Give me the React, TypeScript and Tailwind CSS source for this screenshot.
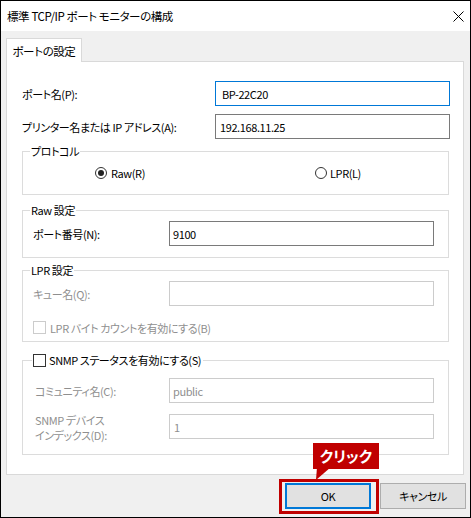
import React from "react";

const inputBase = "flex h-[25px] items-center bg-white";

function Radio({ checked }: { checked?: boolean }) {
  return (
    <span className="flex h-[12px] w-[12px] items-center justify-center rounded-full border border-[#333333] bg-white">
      {checked && <span className="h-[6px] w-[6px] rounded-full bg-[#222222]" />}
    </span>
  );
}

function Check({ disabled }: { disabled?: boolean }) {
  return (
    <span
      className={
        "block h-[13px] w-[13px] shrink-0 border bg-white " +
        (disabled ? "border-[#cccccc]" : "border-[#333333]")
      }
    />
  );
}

export default function App() {
  return (
    <div className="relative h-[518px] w-[471px] bg-white font-['Noto_Sans_CJK_JP',sans-serif] text-[11px] leading-[16px] tracking-[-0.4px] text-black [font-feature-settings:'palt']">
      <div className="flex h-[518px] w-[471px] flex-col border border-black bg-[#f0f0f0]">
        {/* title bar */}
        <div className="flex h-[30px] shrink-0 items-center justify-between bg-white pl-[6px] pr-[6px]">
          <span className="text-[11.5px]">標準 TCP/IP ポート モニターの構成</span>
          <svg width="11" height="11" viewBox="0 0 11 11">
            <path d="M0.5 0.5 L10.5 10.5 M10.5 0.5 L0.5 10.5" stroke="#000" strokeWidth="1" />
          </svg>
        </div>

        {/* tab + page */}
        <div className="pl-[5px] pt-[7px]">
          <div className="relative z-10 -mb-px flex h-[24px] w-[76px] items-center justify-center border border-b-0 border-[#d9d9d9] bg-white text-[11.5px]">
            ポートの設定
          </div>
          <div className="h-[414px] w-[458px] border border-[#d9d9d9] bg-white pl-[15px] pr-[13px] pt-[19px]">
            <div className="flex h-[25px] items-center justify-between">
              <span>ポート名(P):</span>
              <div className={inputBase + " w-[235px] border border-[#0078d7] pl-[6px]"}>BP-22C20</div>
            </div>
            <div className="mt-[8px] flex h-[25px] items-center justify-between">
              <span>プリンター名または IP アドレス(A):</span>
              <div className={inputBase + " w-[235px] border border-[#7a7a7a] pl-[4px]"}>192.168.11.25</div>
            </div>

            {/* protocol */}
            <fieldset className="mt-[4px] w-[427px] border border-[#dcdcdc]">
              <legend className="ml-[7px] h-[16px] px-[1px]">プロトコル</legend>
              <div className="flex h-[35px] pl-[72px] pt-[8px]">
                <label className="flex h-[12px] w-[220px] items-center gap-[4px]">
                  <Radio checked />
                  <span>Raw(R)</span>
                </label>
                <label className="flex h-[12px] items-center gap-[3px]">
                  <Radio />
                  <span>LPR(L)</span>
                </label>
              </div>
            </fieldset>

            {/* raw settings */}
            <fieldset className="mt-[7px] w-[427px] border border-[#dcdcdc]">
              <legend className="ml-[7px] h-[16px] px-[1px]">Raw 設定</legend>
              <div className="mb-[11px] mt-[3px] flex h-[25px] items-center pl-[10px]">
                <span className="w-[136px]">ポート番号(N):</span>
                <div className={inputBase + " w-[265px] border border-[#7a7a7a] pl-[3px]"}>9100</div>
              </div>
            </fieldset>

            {/* lpr settings */}
            <fieldset className="mt-[4px] w-[427px] border border-[#dcdcdc]">
              <legend className="ml-[7px] h-[16px] px-[1px]">LPR 設定</legend>
              <div className="mt-[3px] flex h-[25px] items-center pl-[10px]">
                <span className="w-[136px] text-[#8f8f8f]">キュー名(Q):</span>
                <div className={inputBase + " w-[265px] border border-[#cccccc]"} />
              </div>
              <div className="mb-[7px] mt-[15px] flex h-[13px] items-center gap-[4px] pl-[10px] text-[#8f8f8f]">
                <Check disabled />
                <span>LPR バイト カウントを有効にする(B)</span>
              </div>
            </fieldset>

            {/* snmp */}
            <fieldset className="mt-[10px] w-[427px] border border-[#dcdcdc]">
              <legend className="ml-[9px] flex h-[16px] items-center gap-[3px] pl-[1px] pr-[2px]">
                <Check />
                <span>SNMP ステータスを有効にする(S)</span>
              </legend>
              <div className="mt-[10px] flex h-[25px] items-center pl-[12px]">
                <span className="w-[134px] text-[#8f8f8f]">コミュニティ名(C):</span>
                <div className={inputBase + " w-[265px] border border-[#cccccc] pl-[3px] text-[#8f8f8f]"}>public</div>
              </div>
              <div className="mb-[15px] mt-[11px] flex h-[25px] items-start pl-[12px]">
                <span className="-mt-[1px] flex w-[134px] flex-col leading-[15px] text-[#8f8f8f]">
                  <span>SNMP デバイス</span>
                  <span>インデックス(D):</span>
                </span>
                <div className={inputBase + " w-[265px] border border-[#cccccc] pl-[4px] text-[#8f8f8f]"}>1</div>
              </div>
            </fieldset>
          </div>
        </div>

        {/* dialog buttons */}
        <div className="flex justify-end gap-[9px] pr-[4px] pt-[8px]">
          <button className="flex h-[26px] w-[86px] items-center justify-center border-2 border-[#0078d7] bg-[#e1e1e1]">
            OK
          </button>
          <button className="flex h-[26px] w-[86px] items-center justify-center border border-[#adadad] bg-[#e1e1e1]">
            キャンセル
          </button>
        </div>
      </div>

      {/* annotation */}
      <div className="absolute left-[279px] top-[479px] h-[35px] w-[100px] border-[3px] border-[#c00000]" />
      <div className="absolute left-[313px] top-[443px] flex h-[26px] w-[66px] items-center justify-center bg-[#c00000] text-[15px] font-bold tracking-normal text-white">
        クリック
      </div>
      <svg className="absolute left-[314px] top-[467px]" width="20" height="14" viewBox="0 0 20 14">
        <polygon points="3,0 17,0 2,13" fill="#c00000" />
      </svg>
    </div>
  );
}
